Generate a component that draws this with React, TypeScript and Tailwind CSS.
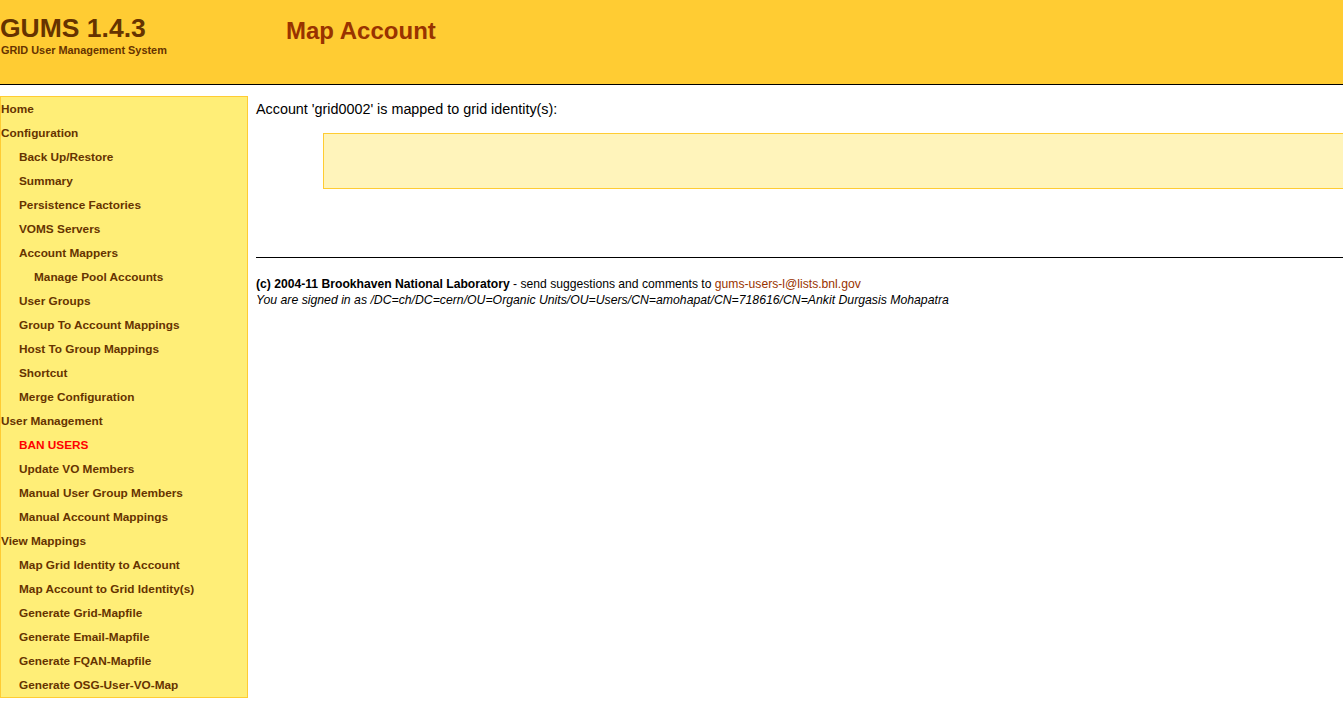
import React from 'react';

type NavItem = { label: string; level: 0 | 1 | 2; active?: boolean };

const navItems: NavItem[] = [
  { label: 'Home', level: 0 },
  { label: 'Configuration', level: 0 },
  { label: 'Back Up/Restore', level: 1 },
  { label: 'Summary', level: 1 },
  { label: 'Persistence Factories', level: 1 },
  { label: 'VOMS Servers', level: 1 },
  { label: 'Account Mappers', level: 1 },
  { label: 'Manage Pool Accounts', level: 2 },
  { label: 'User Groups', level: 1 },
  { label: 'Group To Account Mappings', level: 1 },
  { label: 'Host To Group Mappings', level: 1 },
  { label: 'Shortcut', level: 1 },
  { label: 'Merge Configuration', level: 1 },
  { label: 'User Management', level: 0 },
  { label: 'BAN USERS', level: 1, active: true },
  { label: 'Update VO Members', level: 1 },
  { label: 'Manual User Group Members', level: 1 },
  { label: 'Manual Account Mappings', level: 1 },
  { label: 'View Mappings', level: 0 },
  { label: 'Map Grid Identity to Account', level: 1 },
  { label: 'Map Account to Grid Identity(s)', level: 1 },
  { label: 'Generate Grid-Mapfile', level: 1 },
  { label: 'Generate Email-Mapfile', level: 1 },
  { label: 'Generate FQAN-Mapfile', level: 1 },
  { label: 'Generate OSG-User-VO-Map', level: 1 },
];

const indent = {
  0: 'pl-0',
  1: 'pl-[18px]',
  2: 'pl-[33px]',
};

export default function App() {
  return (
    <div className="min-h-[711px] w-[1343px] overflow-hidden bg-white font-['Liberation_Sans',Arial,sans-serif]">
      <header className="flex h-[85px] border-b border-black bg-[#ffcc33]">
        <div className="w-[286px] pt-[14px]">
          <h1 className="text-[26.5px] font-bold leading-[29px] text-[#663300]">GUMS 1.4.3</h1>
          <p className="pl-px text-[10.9px] font-bold leading-[14px] text-[#663300]">GRID User Management System</p>
        </div>
        <h2 className="pt-[16px] text-[24px] font-bold leading-[30px] text-[#993300]">Map Account</h2>
      </header>

      <div className="flex pt-[11px]">
        <nav className="h-[602px] w-[248px] shrink-0 border border-[#ffcc33] bg-[#ffee77]">
          <ul>
            {navItems.map((item) => (
              <li
                key={item.label}
                className={`${indent[item.level]} h-6 whitespace-nowrap text-[11.8px] font-bold leading-6 ${
                  item.active ? 'text-[#ff0000]' : 'text-[#663300]'
                }`}
              >
                {item.label}
              </li>
            ))}
          </ul>
        </nav>

        <main className="flex-1 pl-2">
          <p className="pt-[5px] text-[14.35px] leading-[17px] text-black">
            Account 'grid0002' is mapped to grid identity(s):
          </p>
          <div className="ml-[67px] mr-[-4px] mt-[15px] h-[56px] border border-[#ffcc33] bg-[#fff4bb]" />
          <hr className="mt-[68px] border-t border-black" />
          <div className="whitespace-nowrap pt-[18px] text-[12.15px] leading-4 text-black">
            <p>
              <span className="font-bold">(c) 2004-11 Brookhaven National Laboratory</span> - send suggestions and
              comments to <a className="text-[#993300]">gums-users-l@lists.bnl.gov</a>
            </p>
            <p className="text-[12.25px] italic">
              You are signed in as /DC=ch/DC=cern/OU=Organic Units/OU=Users/CN=amohapat/CN=718616/CN=Ankit Durgasis
              Mohapatra
            </p>
          </div>
        </main>
      </div>
    </div>
  );
}
